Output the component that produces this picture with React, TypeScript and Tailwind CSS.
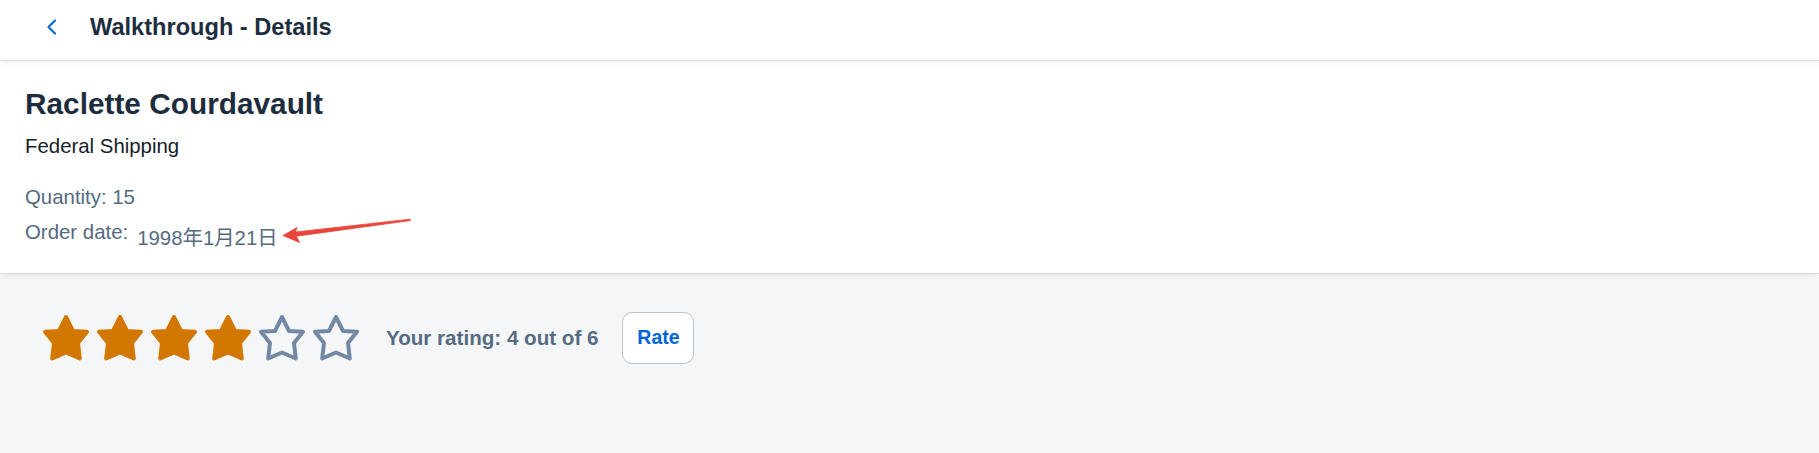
import React from "react";

const font = { fontFamily: '"Liberation Sans", "Noto Sans CJK SC", Arial, sans-serif' };

function Star({ filled }: { filled: boolean }) {
  const color = filled ? "#d27700" : "#7389a3";
  return (
    <svg width="48" height="48" viewBox="0 0 48 48" className="shrink-0">
      <polygon
        points="24,3 31,17 45,17.8 36,29 37.8,44.5 24,38.5 10.2,44.5 12,29 3,17.8 17,17"
        fill={filled ? color : "none"}
        stroke={color}
        strokeWidth="4"
        strokeLinejoin="round"
      />
    </svg>
  );
}

export default function App() {
  const rating = 4;
  const max = 6;

  return (
    <div className="w-full h-[453px] bg-[#f5f6f7] text-[#1d2d3e]" style={font}>
      {/* Shell bar */}
      <div className="relative z-20 h-[60px] bg-white flex items-center pb-[6px] shadow-[0_1px_0_#d9dbde,0_3px_6px_rgba(0,0,0,0.06)]">
        <button className="w-[90px] h-full flex items-center pl-[46px]">
          <svg width="11" height="16" viewBox="0 0 11 16">
            <polyline points="9,1.5 2.5,8 9,14.5" fill="none" stroke="#0a6ed1" strokeWidth="2.2" strokeLinecap="round" strokeLinejoin="round" />
          </svg>
        </button>
        <h1 className="text-[23.6px] leading-[28px] font-bold text-[#1d2d3e]">Walkthrough - Details</h1>
      </div>

      {/* Object header */}
      <div className="relative z-10 bg-white h-[213px] px-[25px] pt-[26px] shadow-[0_1px_0_#d9dbde,0_3px_6px_rgba(0,0,0,0.06)]">
        <h2 className="text-[29.8px] leading-[36px] font-bold text-[#1d2d3e]">Raclette Courdavault</h2>
        <p className="mt-[12px] text-[20.4px] leading-[24px] text-[#131e29]">Federal Shipping</p>
        <p className="mt-[27px] text-[20.4px] leading-[24px] text-[#556b82]">Quantity: 15</p>
        <div className="mt-[11px] flex items-start text-[20.4px] leading-[24px] text-[#556b82]">
          <span>Order date:</span>
          <span className="ml-[9px] mt-[6px]">1998年1月21日</span>
        </div>

        <svg className="absolute left-[280px] top-[155px]" width="135" height="30" viewBox="0 0 135 30">
          <polygon
            points="3,20.5 17,12.5 15.5,17 130,4.2 130.5,5.6 16.5,21.2 19.5,27.5"
            fill="#e8463b"
            stroke="#e8463b"
            strokeWidth="0.8"
            strokeLinejoin="round"
          />
        </svg>
      </div>

      {/* Rating */}
      <div className="flex items-center pl-[42px] pt-[39px]">
        <div className="flex gap-[6px]">
          {Array.from({ length: max }).map((_, i) => (
            <Star key={i} filled={i < rating} />
          ))}
        </div>
        <span className="ml-[26px] text-[20.6px] font-bold text-[#556b82]">
          Your rating: {rating} out of {max}
        </span>
        <button className="ml-[24px] w-[72px] h-[52px] rounded-[10px] border border-[#bcc3ca] bg-white text-[19.5px] font-bold text-[#0064d9]">
          Rate
        </button>
      </div>
    </div>
  );
}
